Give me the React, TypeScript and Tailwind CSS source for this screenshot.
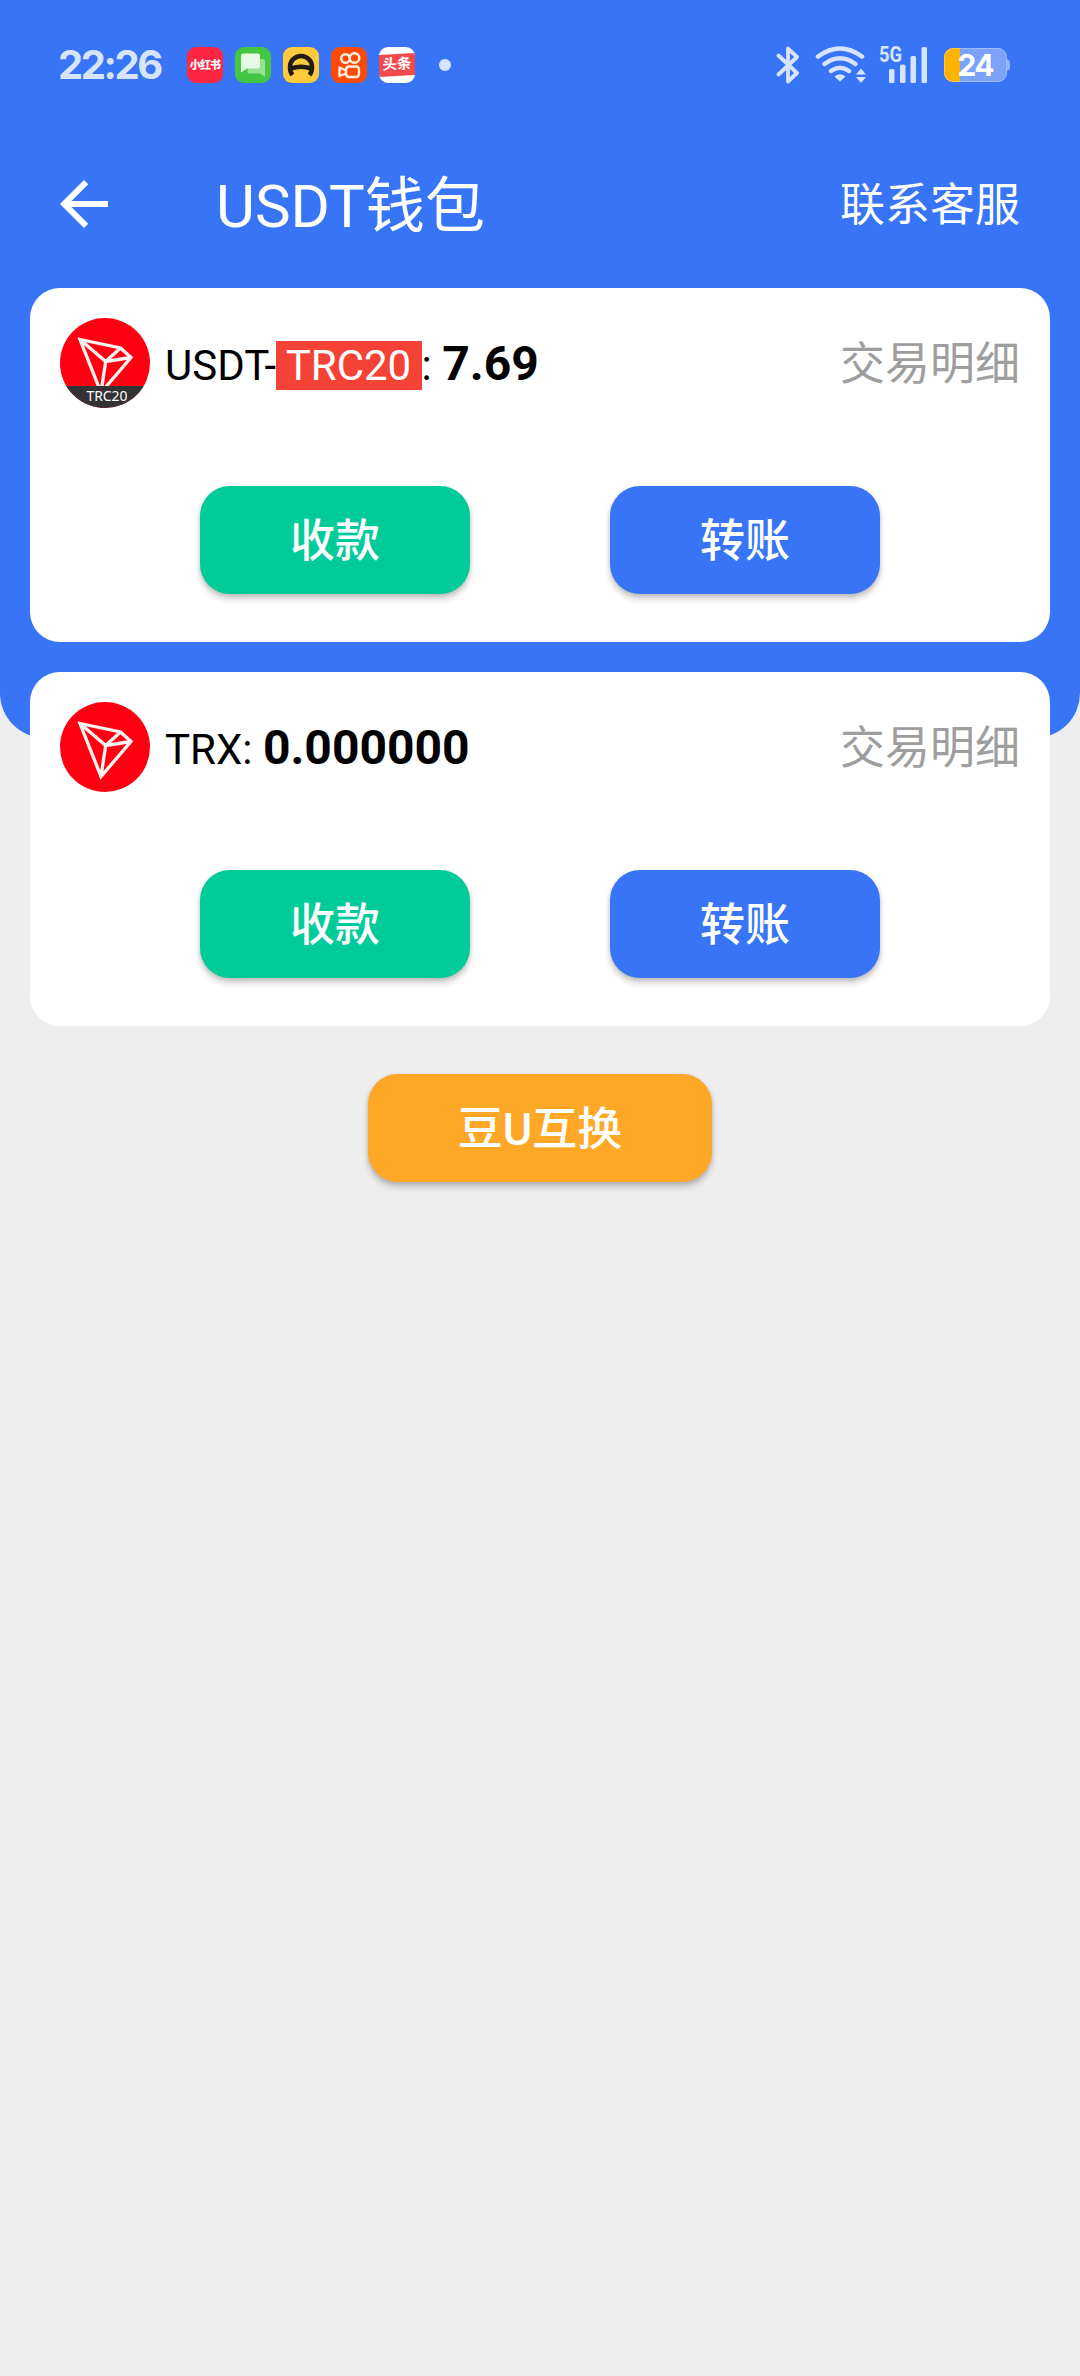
import React from 'react';

interface Wallet {
    id: string;
    name: string;
    tag?: string;
    balance: string;
}

const wallets: Wallet[] = [
    { id: 'usdt', name: 'USDT', tag: 'TRC20', balance: '7.69' },
    { id: 'trx', name: 'TRX', balance: '0.000000' },
];

function TronLogo({ tag }: { tag?: string }) {
    return (
        <svg viewBox="0 0 90 90" className="w-[90px] h-[90px] shrink-0">
            <defs>
                <clipPath id="tron-circle">
                    <circle cx="45" cy="45" r="45" />
                </clipPath>
            </defs>
            <g clipPath="url(#tron-circle)">
                <rect width="90" height="90" fill="#ff0013" />
                <path
                    d="M20 21.5 60.5 30 71 39.5 41 74.5Z M20 21.5 45.7 43.5 60.5 30 M71 39.5 45.7 43.5 41 74.5"
                    fill="none"
                    stroke="#fff5f0"
                    strokeWidth="3.3"
                />
                {tag && (
                    <>
                        <rect y="68" width="90" height="22" fill="#333333" />
                        <text x="47" y="82.5" textAnchor="middle" fontSize="14.5" fill="#ffffff" textLength="41" lengthAdjust="spacingAndGlyphs" className="font-['Noto_Sans']">
                            {tag}
                        </text>
                    </>
                )}
            </g>
        </svg>
    );
}

function StatusBar() {
    return (
        <div className="flex items-center h-[130px] pl-[58px] pr-[70px] text-[#d7e4fd]">
            <span className="w-[129px] font-['Inter'] text-[40px] font-bold leading-none tracking-[-2.4px]">22:26</span>

            {/* Notification icons */}
            <div className="flex items-center gap-3">
                <div className="flex items-center justify-center w-9 h-9 rounded-[9px] bg-[#fe2641]">
                    <span className="text-white text-[11px] font-black tracking-[-0.8px] leading-none whitespace-nowrap">小红书</span>
                </div>
                <svg viewBox="0 0 36 36" className="w-9 h-9">
                    <rect width="36" height="36" rx="9" fill="#43c644" />
                    <path d="M14 12H28.5Q30 12 30 13.500V30L25 26.500H14Q12.500 26.500 12.500 25V12Z" fill="#96e294" />
                    <path d="M8 6.500H23Q25 6.500 25 8.500V19.500Q25 21.500 23 21.500H12L6 25.500V8.500Q6 6.500 8 6.500Z" fill="#e4fae3" />
                </svg>
                <svg viewBox="0 0 36 36" className="w-9 h-9">
                    <rect width="36" height="36" rx="9" fill="#ffcb3d" />
                    <path d="M9.500 28Q7 25 7 20A11 11 0 0 1 29 20Q29 25 26.500 28M8 21.500Q18 18 28 21.500" fill="none" stroke="#201c14" strokeWidth="4.600" />
                </svg>
                <svg viewBox="0 0 36 36" className="w-9 h-9" fill="none" stroke="#fff1df" strokeWidth="2.4">
                    <rect width="36" height="36" rx="9" fill="#ff4a06" stroke="none" />
                    <circle cx="14.500" cy="11.500" r="4.300" />
                    <circle cx="23.500" cy="11" r="4.800" />
                    <rect x="15" y="19.500" width="13" height="10.500" rx="3" />
                    <path d="M15 23.500 8.500 20.500V29L15 26.500" strokeLinejoin="round" />
                </svg>
                <div className="flex flex-col justify-center w-9 h-9 rounded-[9px] bg-white overflow-hidden">
                    <span className="flex items-center justify-center h-[22px] bg-[#f2494c] text-white text-[14.5px] font-bold leading-none -skew-y-3 whitespace-nowrap">
                        头条
                    </span>
                </div>
            </div>
            <span className="w-3 h-3 ml-6 rounded-full bg-[#d7e4fd]" />

            {/* System icons */}
            <svg viewBox="0 0 24 38" className="w-6 h-[38px] ml-auto" fill="none" stroke="#d7e4fd" strokeWidth="3.800" strokeLinejoin="round" strokeLinecap="round">
                <path d="M2.500 9.500 21 27 12 35.500V2.500L21 11 2.500 28.500" />
            </svg>
            <svg viewBox="0 0 52 38" className="w-[52px] h-[38px] ml-[15px]" fill="none" stroke="#d7e4fd" strokeWidth="4.600" strokeLinecap="round">
                <path d="M3 10.500Q25 -5.500 47 10.500" />
                <path d="M9.500 18Q25 6.500 40.500 18" />
                <path d="M16 25Q25 18.500 34 25" />
                <path d="M20.500 30.500Q25 27.500 29.500 30.500L25 34.500Z" fill="#d7e4fd" strokeWidth="1.500" strokeLinejoin="round" />
                <path d="M46 22.500 51 28.500H41ZM46 37 51 31H41Z" fill="#d7e4fd" stroke="none" />
            </svg>
            <svg viewBox="0 0 50 38" className="w-[50px] h-[38px] ml-[12px] overflow-visible" fill="#d7e4fd">
                <text x="0" y="15.500" fontSize="22" fontWeight="700" textLength="23" lengthAdjust="spacingAndGlyphs" className="font-['Roboto']">
                    5G
                </text>
                <rect x="10" y="23" width="5.500" height="14" rx="1.500" />
                <rect x="21" y="18.500" width="5.500" height="18.500" rx="1.500" />
                <rect x="31.500" y="10" width="5.500" height="27" rx="1.500" />
                <rect x="42.500" y="1" width="5.500" height="36" rx="1.500" />
            </svg>
            <svg viewBox="0 0 66 34" className="w-[66px] h-[34px] ml-[15px]">
                <defs>
                    <clipPath id="battery-body">
                        <rect width="63" height="34" rx="9" />
                    </clipPath>
                </defs>
                <path d="M63 11Q66 12 66 15V19Q66 22 63 23Z" fill="#93b4fa" />
                <g clipPath="url(#battery-body)">
                    <rect width="63" height="34" fill="#7ba3f9" />
                    <rect width="16" height="34" fill="#ffb200" />
                </g>
                <rect x="0.500" y="0.500" width="62" height="33" rx="8.500" fill="none" stroke="#ffffff" strokeOpacity="0.25" />
                <text x="32" y="28" textAnchor="middle" fontSize="30" fontWeight="700" fill="#ffffff" textLength="37" className="font-['Inter']">
                    24
                </text>
            </svg>
        </div>
    );
}

function Button({ className, children }: { className: string; children: React.ReactNode }) {
    return (
        <button
            className={`h-[108px] px-[90px] pt-0.5 rounded-[30px] text-white text-[45px] leading-none font-medium whitespace-nowrap shadow-[0_5px_6px_rgba(0,0,0,0.2),0_1px_4px_rgba(0,0,0,0.12)] ${className}`}
        >
            {children}
        </button>
    );
}

function WalletCard({ wallet }: { wallet: Wallet }) {
    return (
        <div className="h-[354px] p-[30px] rounded-[30px] bg-white">
            <div className="flex items-center h-[90px]">
                <TronLogo tag={wallet.tag} />
                <div className="flex items-baseline ml-[15px] pt-0.5 text-[42px] leading-[49px] text-black whitespace-pre">
                    <span>{wallet.tag ? `${wallet.name}-` : wallet.name}</span>
                    {wallet.tag && <span className="bg-[#f44336] text-white">{` ${wallet.tag} `}</span>}
                    <span>: </span>
                    <span className="text-[48px] font-bold">{wallet.balance}</span>
                </div>
                <a className="ml-auto pt-0.5 text-[45px] leading-none text-[#9e9e9e]">交易明细</a>
            </div>
            <div className="flex justify-around mt-[78px] px-[70px]">
                <Button className="bg-[#02cb9a]">收款</Button>
                <Button className="bg-[#3875f6]">转账</Button>
            </div>
        </div>
    );
}

export default function App() {
    return (
        <div className="w-[1080px] h-[2376px] overflow-hidden bg-[#eeeeee] font-['Roboto','Noto_Sans_CJK_SC',sans-serif]">
            {/* Header */}
            <div className="h-[738px] rounded-b-[45px] bg-[#3875f6]">
                <StatusBar />
                <div className="flex items-center h-[148px] pl-12 pr-[60px] text-white">
                    <svg viewBox="0 0 24 24" className="w-[72px] h-[72px]" fill="currentColor">
                        <path d="M20 11H7.830l5.590-5.590L12 4l-8 8 8 8 1.410-1.410L7.830 13H20v-2z" />
                    </svg>
                    <h1 className="ml-24 pt-1.5 text-[60px] leading-none">USDT钱包</h1>
                    <a className="ml-auto pt-0.5 text-[45px] leading-none">联系客服</a>
                </div>
            </div>

            {/* Wallets */}
            <div className="relative flex flex-col gap-[30px] mt-[-450px] px-[30px]">
                {wallets.map((wallet) => (
                    <WalletCard key={wallet.id} wallet={wallet} />
                ))}
            </div>

            <div className="flex justify-center mt-12">
                <Button className="bg-[#ffa726]">豆U互换</Button>
            </div>
        </div>
    );
}
